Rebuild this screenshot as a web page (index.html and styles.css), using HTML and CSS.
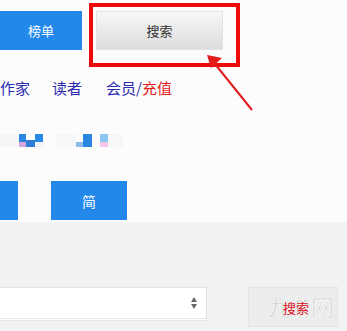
FILE: index.html
```html
<!DOCTYPE html>
<html lang="zh">
<head>
<meta charset="utf-8">
<link rel="stylesheet" href="styles.css">
</head>
<body>
<div class="page">
  <section class="upper">
    <div class="row-nav">
      <div class="btn-blue btn-rank">榜单</div>
      <div class="highlight">
        <div class="btn-search">搜索</div>
      </div>
    </div>
    <div class="row-links">
      <a class="lnk l1">作家</a>
      <a class="lnk l2">读者</a>
      <a class="lnk l3">会员/<span class="red">充值</span></a>
    </div>
    <div class="mosaic">
      <i class="px" style="left:0;top:0;width:19px;height:13px;background:#f6f6f8"></i>
      <i class="px" style="left:56px;top:0;width:20px;height:13px;background:#f7f7f9"></i>
      <i class="px" style="left:108px;top:0;width:15px;height:13px;background:#f6f7f9"></i>
      <i class="px" style="left:19px;top:0;width:7px;height:8px;background:#2a86e0"></i>
      <i class="px" style="left:26px;top:6px;width:9px;height:7px;background:#2f7fd8"></i>
      <i class="px" style="left:35px;top:0;width:8px;height:8px;background:#2a88e6"></i>
      <i class="px" style="left:19px;top:8px;width:7px;height:5px;background:#d8a4e0"></i>
      <i class="px" style="left:35px;top:8px;width:8px;height:5px;background:#f0f4fb"></i>
      <i class="px" style="left:76px;top:8px;width:7px;height:5px;background:#8cbcec"></i>
      <i class="px" style="left:83px;top:0;width:9px;height:13px;background:#2a86e0"></i>
      <i class="px" style="left:100px;top:0;width:8px;height:8px;background:#8ec6f2"></i>
      <i class="px" style="left:100px;top:8px;width:8px;height:5px;background:#f4c8e6"></i>
    </div>
    <div class="row-btns">
      <div class="btn-blue btn-stub"></div>
      <div class="btn-blue btn-jian">简</div>
    </div>
  </section>
  <section class="lower">
    <div class="row-form">
      <div class="select">
        <svg class="arrows" width="6" height="12" viewBox="0 0 6 12">
          <polygon points="3,0 6,5 0,5" fill="#666"/>
          <polygon points="0,7 6,7 3,12" fill="#666"/>
        </svg>
      </div>
      <div class="btn-go">
        <span class="wm">九游网</span>
        <span class="go-text">搜索</span>
      </div>
    </div>
  </section>
  <svg class="arrow" width="347" height="331" viewBox="0 0 347 331">
    <line x1="215" y1="64" x2="252" y2="110" stroke="#e41c1c" stroke-width="2"/>
    <polygon points="207,55 222,58 211,68" fill="#e41c1c"/>
  </svg>
</div>
</body>
</html>
```

FILE: styles.css
```css
* { box-sizing: border-box; }
html, body { margin: 0; padding: 0; }
body {
  width: 347px;
  height: 331px;
  overflow: hidden;
  font-family: "Noto Sans CJK SC", "Microsoft YaHei", sans-serif;
  background: #f2f2f2;
}
.page { position: relative; width: 347px; height: 331px; }
.upper {
  background: #fcfcfd;
  height: 222px;
  padding-top: 3px;
}
.row-nav {
  display: flex;
  align-items: flex-start;
  height: 64px;
}
.btn-blue {
  background: #2288ea;
  color: #fff;
  display: flex;
  align-items: center;
  justify-content: center;
  font-size: 13px;
}
.btn-rank {
  width: 82px;
  height: 39px;
  margin-top: 8px;
}
.highlight {
  margin-left: 7px;
  width: 151px;
  height: 64px;
  border: 4px solid #ee0a0a;
  padding: 4px 0 0 3px;
}
.btn-search {
  width: 127px;
  height: 39px;
  background: linear-gradient(#f7f7f7, #dcdcdc);
  border: 1px solid #e2e2e2;
  display: flex;
  align-items: center;
  justify-content: center;
  font-size: 13px;
  color: #333;
}
.row-links {
  display: flex;
  margin-top: 10px;
  height: 20px;
  align-items: center;
  font-size: 15px;
}
.lnk { color: #2b2bb0; white-space: nowrap; }
.l2 { margin-left: 22px; }
.l3 { margin-left: 24px; }
.red { color: #e42020; }
.mosaic {
  position: relative;
  margin-top: 37px;
  height: 13px;
}
.px { position: absolute; display: block; }
.row-btns {
  display: flex;
  margin-top: 34px;
  height: 39px;
}
.btn-stub { width: 18px; height: 39px; }
.btn-jian { width: 76px; height: 39px; margin-left: 33px; font-size: 14px; }
.lower { padding-top: 65px; }
.row-form {
  display: flex;
  align-items: flex-start;
}
.select {
  width: 207px;
  height: 34px;
  background: #fff;
  border: 1px solid #e3e3e3;
  border-left: none;
  border-bottom: 3px double #e6e6e6;
  display: flex;
  align-items: center;
  justify-content: flex-end;
  padding-right: 9px;
}
.arrows { display: block; }
.btn-go {
  position: relative;
  margin-left: 41px;
  width: 90px;
  height: 40px;
  background: #ececec;
  border: 1px solid #e4e4e4;
  display: flex;
  align-items: center;
  justify-content: center;
}
.go-text {
  position: relative;
  color: #d8101c;
  font-size: 13px;
  margin-left: 6px;
}
.wm {
  position: absolute;
  left: 18px;
  top: 1px;
  font-size: 23px;
  color: #b4b4b4;
  letter-spacing: -1px;
  -webkit-text-stroke: 1px #f6f6f6;
}
.arrow { position: absolute; left: 0; top: 0; pointer-events: none; }
```
